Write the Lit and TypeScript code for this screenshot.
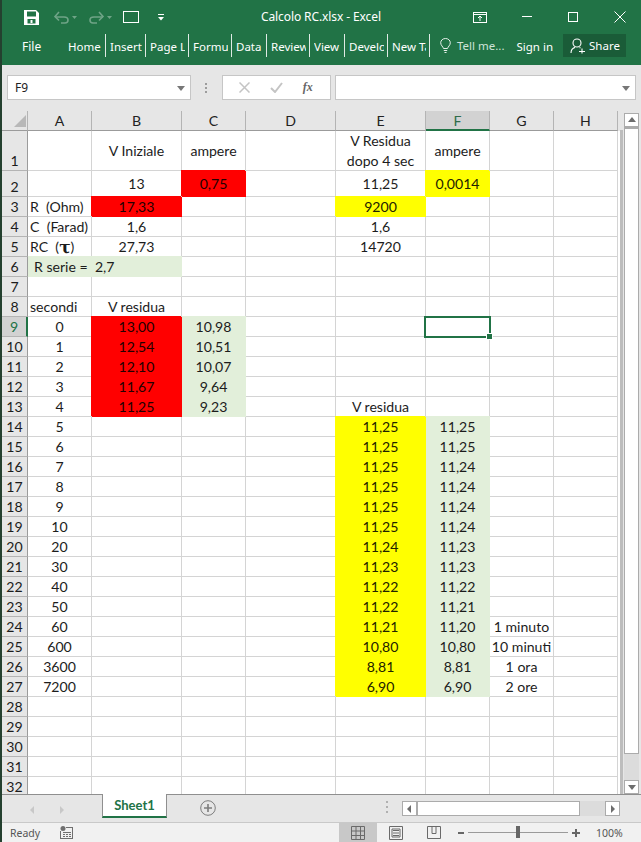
import { LitElement, html, css, svg } from "lit";
import { customElement } from "lit/decorators.js";

type Cell = { t?: unknown; f?: "r" | "y" | "g"; left?: boolean; span?: number; sel?: boolean };

const COLS = ["A", "B", "C", "D", "E", "F", "G", "H"];
const TABS: [string, number][] = [
  ["Home", 42], ["Insert", 40], ["Page L", 43], ["Formu", 43], ["Data", 35],
  ["Review", 43], ["View", 35], ["Develop", 43], ["New Tab", 42],
];
const R = (t: string): Cell => ({ t, f: "r" });
const Y = (t: string): Cell => ({ t, f: "y" });
const G = (t: string): Cell => ({ t, f: "g" });
const L = (t: unknown): Cell => ({ t, left: true });
const T = (t: unknown): Cell => ({ t });
const E: Cell = {};

function buildRows(): Cell[][] {
  const rows: Cell[][] = [];
  rows.push([E, T("V Iniziale"), T("ampere"), E, T(html`V Residua<br />dopo 4 sec`), T("ampere"), E, E]);
  rows.push([E, T("13"), R("0,75"), E, T("11,25"), Y("0,0014"), E, E]);
  rows.push([L("R  (Ohm)"), R("17,33"), E, E, Y("9200"), E, E, E]);
  rows.push([L("C  (Farad)"), T("1,6"), E, E, T("1,6"), E, E, E]);
  rows.push([L(html`RC  (<b class="tau">τ</b>)`), T("27,73"), E, E, T("14720"), E, E, E]);
  rows.push([{ t: html`<span class="serie">R serie =  2,7</span>`, f: "g", left: true, span: 2 }, E, E, E, E, E, E]);
  rows.push([E, E, E, E, E, E, E, E]);
  rows.push([L("secondi"), T("V residua"), E, E, E, E, E, E]);
  const mid = [["0", "13,00", "10,98"], ["1", "12,54", "10,51"], ["2", "12,10", "10,07"], ["3", "11,67", "9,64"], ["4", "11,25", "9,23"]];
  mid.forEach(([a, b, c], i) =>
    rows.push([T(a), R(b), G(c), E, i === 4 ? T("V residua") : E, i === 0 ? { sel: true } : E, E, E])
  );
  const low = [
    ["5", "11,25", "11,25", ""], ["6", "11,25", "11,25", ""], ["7", "11,25", "11,24", ""],
    ["8", "11,25", "11,24", ""], ["9", "11,25", "11,24", ""], ["10", "11,25", "11,24", ""],
    ["20", "11,24", "11,23", ""], ["30", "11,23", "11,23", ""], ["40", "11,22", "11,22", ""],
    ["50", "11,22", "11,21", ""], ["60", "11,21", "11,20", "1 minuto"], ["600", "10,80", "10,80", "10 minuti"],
    ["3600", "8,81", "8,81", "1 ora"], ["7200", "6,90", "6,90", "2 ore"],
  ];
  low.forEach(([a, e, f, g]) => rows.push([T(a), E, E, E, Y(e), G(f), g ? T(g) : E, E]));
  for (let i = 0; i < 5; i++) rows.push([E, E, E, E, E, E, E, E]);
  return rows;
}

@customElement("app-root")
export class AppRoot extends LitElement {
  static styles = css`
    :host {
      display: block;
      width: 641px;
      height: 842px;
      overflow: hidden;
      background: #e6e6e6;
      font-family: "Noto Sans", sans-serif;
      color: #222;
    }
    .app { display: flex; flex-direction: column; height: 842px; border-left: 2px solid #24402f; box-sizing: border-box; }
    svg { display: block; flex: none; }

    /* title bar */
    .head { background: #217346; height: 65px; color: #fff; flex: none; display: flex; flex-direction: column; }
    .title { height: 34px; display: flex; align-items: center; position: relative; }
    .qat { display: flex; align-items: center; padding-left: 22px; }
    .q2 { margin-left: 15px; }
    .q3 { margin-left: 11px; }
    .q4 { margin-left: 10px; }
    .q5 { margin-left: 19px; }
    .name { position: absolute; left: 259px; top: 8px; font-size: 12px; line-height: 18px; white-space: pre; letter-spacing: -0.1px; }
    .win { margin-left: auto; display: flex; align-items: center; padding-right: 15px; }
    .w2 { margin-left: 35px; }
    .w3 { margin-left: 36px; }
    .w4 { margin-left: 36px; }

    .ribbon { height: 31px; display: flex; align-items: flex-start; font-size: 11.5px; }
    .file { width: 62px; padding-left: 20px; box-sizing: border-box; line-height: 26px; font-size: 12px; }
    .tabs { display: flex; }
    .tab {
      height: 23px; line-height: 25px; box-sizing: border-box; padding: 0 3px 0 4px;
      border-right: 1px solid #dfeae4; flex: none;
    }
    .tab span { display: block; overflow: hidden; white-space: nowrap; }
    .tell { display: flex; align-items: center; height: 23px; margin-left: 10px; color: #cfe3d8; line-height: 25px; }
    .tell span { margin-left: 6px; }
    .signin { margin-left: 12px; line-height: 25px; }
    .share { margin-left: 10px; width: 63px; height: 23px; background: #1a5c38; display: flex; align-items: center; padding-left: 7px; box-sizing: border-box; line-height: 25px; }
    .share span { margin-left: 3px; }

    /* formula bar */
    .fbar { height: 46px; flex: none; display: flex; align-items: flex-start; padding: 10px 5px 0 5px; box-sizing: border-box; }
    .box { background: #fff; border: 1px solid #c6c6c6; height: 25px; box-sizing: border-box; display: flex; align-items: center; }
    .namebox { width: 184px; font-size: 12px; padding: 0 5px 0 7px; justify-content: space-between; }
    .grip { width: 31px; display: flex; justify-content: center; padding-top: 8px; }
    .btns { width: 109px; justify-content: space-around; padding: 0 7px; }
    .fx { font-family: "Liberation Serif", serif; font-style: italic; font-weight: bold; font-size: 12px; color: #666; }
    .input { margin-left: 4px; width: 302px; justify-content: flex-end; padding-right: 5px; }

    /* sheet */
    .sheet { flex: 1; display: flex; min-height: 0; background: #e6e6e6; overflow: hidden; }
    .grid {
      width: 616px; flex: none; display: grid;
      grid-template-columns: 26px 64px 90px 64px 90px 90px 64px 64px 64px;
      grid-template-rows: 20px 40px 26px;
      grid-auto-rows: 20px;
      font-family: Lato, sans-serif; font-size: 14.1px; color: #1c1c1c;
      height: 683px; overflow: hidden; align-content: start; background: #fff;
    }
    .grid > div { box-sizing: border-box; }
    .c {
      border-right: 1px solid #d4d4d4; border-bottom: 1px solid #d4d4d4;
      display: flex; align-items: center; justify-content: center; text-align: center;
      white-space: pre; line-height: 20px; position: relative;
    }
    .c.left { justify-content: flex-start; padding-left: 2px; }
    .c.r { background: #f00; border-color: #f00; box-shadow: -1px -1px 0 #f00; color: #200; }
    .c.y { background: #ff0; border-color: #ff0; box-shadow: -1px -1px 0 #ff0; color: #220; }
    .c.g { background: #e2efda; border-color: #e2efda; box-shadow: 0 -1px 0 #e2efda; }
    .serie { padding-left: 4px; }
    .tau { font-family: "DejaVu Serif", serif; font-size: 17px; line-height: 14px; }
    .h {
      background: #e6e6e6; border-right: 1px solid #b4b4b4; border-bottom: 1px solid #9b9b9b;
      display: flex; align-items: center; justify-content: center; color: #222;
    }
    .rh { border-bottom: 1px solid #b4b4b4; align-items: flex-end; line-height: 19px; background: #e6e6e6; border-right: 1px solid #9b9b9b; display: flex; justify-content: center; }
    .rh.on { background: #d2d2d2; border-right: 2px solid #217346; color: #217346; }
    .h.on { background: #d2d2d2; border-bottom: 2px solid #217346; color: #2f6b4b; }
    .corner { display: flex; align-items: flex-end; padding: 0 0 3px 10px; }
    .sel { position: absolute; left: -2px; right: -2px; top: -1px; bottom: -2px; border: 2px solid #217346; z-index: 2; }
    .sel i { position: absolute; right: -3px; bottom: -3px; width: 5px; height: 5px; background: #217346; border: 1px solid #fff; margin: -1px; box-sizing: content-box; }
    .side { flex: 1; display: flex; }
    .gap { width: 2px; background: #fff; flex: none; margin-top: 20px; }
    .edge { width: 3px; background: #bdbdbd; flex: none; margin-top: 19px; }
    .vs { margin: 2px 0 0 1px; width: 15px; flex: none; display: flex; flex-direction: column; background: #dcdcdc; box-sizing: border-box; }
    .sb { width: 15px; height: 14px; background: #fff; border: 1px solid #ababab; box-sizing: border-box; display: flex; align-items: center; justify-content: center; flex: none; }
    .vthumb { flex: none; height: 627px; background: #fff; border: 1px solid #ababab; border-top-width: 2px; box-sizing: border-box; }
    .vtrack { flex: 1; }

    /* sheet tabs */
    .tabbar { height: 28px; flex: none; border-top: 1px solid #8f8f8f; display: flex; box-sizing: border-box; }
    .nav { display: flex; align-items: flex-start; padding: 11px 0 0 27px; width: 100px; box-sizing: border-box; gap: 21px; }
    .sheettab {
      width: 65px; height: 24px; margin-top: -1px; background: #fff; box-sizing: border-box;
      border-left: 1px solid #8f8f8f; border-right: 1px solid #8f8f8f; border-bottom: 2px solid #217346;
      color: #217346; font-family: Lato, sans-serif; font-weight: 700; font-size: 13px; text-align: center; line-height: 22px;
    }
    .add { margin: 5px 0 0 33px; }
    .dots { margin: 6px 0 0 170px; }
    .hs { margin: 6px 0 0 14px; width: 218px; height: 15px; display: flex; background: #dcdcdc; }
    .hs .sb { width: 15px; height: 15px; }
    .hthumb { width: 163px; height: 15px; background: #fff; border: 1px solid #ababab; box-sizing: border-box; }
    .hs .sp { flex: 1; }

    /* status */
    .status { height: 20px; flex: none; background: #f1f1f1; border-top: 1px solid #c9c9c9; box-sizing: border-box; display: flex; align-items: center; font-size: 10.5px; color: #555; }
    .ready { margin-left: 8px; width: 50px; }
    .views { display: flex; margin-left: 266px; align-items: stretch; height: 19px; }
    .v { width: 38px; display: flex; align-items: center; justify-content: center; }
    .v.on { background: #c8c8c8; }
    .zoom { display: flex; align-items: center; margin-left: 5px; }
    .slider { width: 100px; height: 1px; background: #9a9a9a; margin: 0 4px; position: relative; }
    .slider i { position: absolute; left: 48px; top: -6px; width: 4px; height: 12px; background: #666; }
    .pct { margin-left: 16px; color: #555; font-size: 10.5px; }
  `;

  private rows = buildRows();

  private tri(dir: "up" | "down" | "left" | "right", color = "#6d6d6d") {
    const p = { up: "0,6 4,1 8,6", down: "0,2 8,2 4,7", left: "5,0 5,8 1,4", right: "2,0 2,8 6,4" }[dir];
    return html`<svg width="8" height="8" viewBox="0 0 8 8"><polygon points=${p} fill=${color} /></svg>`;
  }

  private renderTitle() {
    return html`
      <div class="title">
        <div class="qat">
          <svg width="15" height="15" viewBox="0 0 15 15">
            <path fill="#fff" fill-rule="evenodd" d="M0 0h12l3 3v12H0zM3 1.500v5h9v-5zM3.500 9v4.500h8V9z" />
            <rect x="6.500" y="10" width="2" height="3" fill="#fff" />
          </svg>
          <svg class="q2" width="24" height="14" viewBox="0 0 24 14" fill="none" stroke="#6fa487" stroke-width="1.6">
            <path d="M1 7h9c3 0 4 1.500 4 3s-1 3-3 3H7" /><path d="M5 2L1 6.500l4 4" />
            <polygon points="18,6 23,6 20.500,9" fill="#6fa487" stroke="none" />
          </svg>
          <svg class="q3" width="24" height="14" viewBox="0 0 24 14" fill="none" stroke="#6fa487" stroke-width="1.6">
            <path d="M14 7H5c-3 0-4 1.500-4 3s1 3 3 3h4" /><path d="M10 2l4 4.500-4 4" />
            <polygon points="18,6 23,6 20.500,9" fill="#6fa487" stroke="none" />
          </svg>
          <svg class="q4" width="16" height="12" viewBox="0 0 16 12"><rect x=".5" y=".5" width="15" height="11" fill="none" stroke="#fff" /></svg>
          <svg class="q5" width="6" height="7" viewBox="0 0 6 7"><rect width="6" height="1" y="0" fill="#fff" /><polygon points="0,3 6,3 3,6.500" fill="#fff" /></svg>
        </div>
        <div class="name">Calcolo RC.xlsx - Excel</div>
        <div class="win">
          <svg width="14" height="11" viewBox="0 0 14 11" fill="none" stroke="#fff">
            <rect x=".5" y=".5" width="13" height="10" /><path d="M.5 2.500h13M7 9V4.500M5 6l2-2 2 2" />
          </svg>
          <svg class="w2" width="10" height="2" viewBox="0 0 10 2"><rect width="10" height="1" fill="#fff" /></svg>
          <svg class="w3" width="10" height="10" viewBox="0 0 10 10"><rect x=".5" y=".5" width="9" height="9" fill="none" stroke="#fff" /></svg>
          <svg class="w4" width="12" height="12" viewBox="0 0 12 12" stroke="#fff"><path d="M.5 .5l11 11M11.500 .5l-11 11" /></svg>
        </div>
      </div>
      <div class="ribbon">
        <div class="file">File</div>
        <div class="tabs">
          ${TABS.map(([t, w]) => html`<div class="tab" style="width:${w}px"><span>${t}</span></div>`)}
        </div>
        <div class="tell">
          <svg width="11" height="15" viewBox="0 0 11 15" fill="none" stroke="#e6f0ea">
            <path d="M3.500 10.500C3 8.500.7 7.500.7 4.700a4.800 4.200 0 0 1 9.600 0c0 2.800-2.300 3.800-2.800 5.800z" /><path d="M3.800 12.500h3.400M4.500 14.500h2" />
          </svg>
          <span>Tell me...</span>
        </div>
        <div class="signin">Sign in</div>
        <div class="share">
          <svg width="16" height="16" viewBox="0 0 16 16" fill="none" stroke="#fff" stroke-width="1.1">
            <circle cx="7" cy="5" r="4" /><path d="M1 15c0-3 2-5 4-5.600M9.500 9.500l1 .5M9 13.500h6M12 10.500v5" />
          </svg>
          <span>Share</span>
        </div>
      </div>
    `;
  }

  private renderFormula() {
    return html`
      <div class="fbar">
        <div class="box namebox"><span>F9</span>${this.tri("down", "#777")}</div>
        <div class="grip">
          <svg width="2" height="10" viewBox="0 0 2 10" fill="#9c9c9c"><rect width="2" height="2" /><rect y="4" width="2" height="2" /><rect y="8" width="2" height="2" /></svg>
        </div>
        <div class="box btns">
          <svg width="11" height="11" viewBox="0 0 11 11" stroke="#c4c4c4" stroke-width="1.500"><path d="M.5 .5l10 10M10.500 .5l-10 10" /></svg>
          <svg width="13" height="11" viewBox="0 0 13 11" fill="none" stroke="#c4c4c4" stroke-width="2"><path d="M1 6l4 4 7-9" /></svg>
          <span class="fx">fx</span>
        </div>
        <div class="box input">${this.tri("down", "#777")}</div>
      </div>
    `;
  }

  private renderGrid() {
    return html`
      <div class="grid">
        <div class="h corner">
          <svg width="12" height="12" viewBox="0 0 12 12"><polygon points="12,0 12,12 0,12" fill="#b8b8b8" /></svg>
        </div>
        ${COLS.map((c) => html`<div class="h ${c === "F" ? "on" : ""}">${c}</div>`)}
        ${this.rows.map(
          (row, i) => html`
            <div class="rh ${i === 8 ? "on" : ""}">${i + 1}</div>
            ${row.map(
              (c) => html`<div
                class="c ${c.f ?? ""} ${c.left ? "left" : ""}"
                style=${c.span ? `grid-column:span ${c.span}` : ""}
              >${c.t ?? ""}${c.sel ? html`<div class="sel"><i></i></div>` : ""}</div>`
            )}
          `
        )}
      </div>
    `;
  }

  private renderSide() {
    return html`
      <div class="side">
        <div class="gap"></div>
        <div class="edge"></div>
        <div class="vs">
          <div class="sb">${this.tri("up")}</div>
          <div class="vthumb"></div>
          <div class="vtrack"></div>
          <div class="sb">${this.tri("down")}</div>
        </div>
      </div>
    `;
  }

  private renderTabs() {
    return html`
      <div class="tabbar">
        <div class="nav">${this.tri("left", "#c8c8c8")}${this.tri("right", "#c8c8c8")}</div>
        <div class="sheettab">Sheet1</div>
        <div class="add">
          <svg width="16" height="16" viewBox="0 0 16 16" fill="none" stroke="#7d7d7d">
            <circle cx="8" cy="8" r="7.300" /><path d="M4 8h8M8 4v8" stroke-width="1.600" />
          </svg>
        </div>
        <div class="dots">
          <svg width="2" height="12" viewBox="0 0 2 12" fill="#b0b0b0"><rect width="2" height="2" /><rect y="5" width="2" height="2" /><rect y="10" width="2" height="2" /></svg>
        </div>
        <div class="hs">
          <div class="sb">${this.tri("left")}</div>
          <div class="hthumb"></div>
          <div class="sp"></div>
          <div class="sb">${this.tri("right")}</div>
        </div>
      </div>
    `;
  }

  private renderStatus() {
    const grid = svg`<path d="M.5 .5h13v13H.5zM.5 5h13M.5 9.500h13M5 .5v13M9.500 .5v13" />`;
    return html`
      <div class="status">
        <div class="ready">Ready</div>
        <svg width="13" height="13" viewBox="0 0 13 13" fill="#6f6f6f">
          <circle cx="3" cy="2.500" r="2.500" />
          <path fill-rule="evenodd" d="M6 1h7v12H0V5h1v7h11V2H6z" />
          <path d="M3 6h8v1H3zM3 8h2v1H3zM6 8h2v1H6zM9 8h2v1H9zM3 10h2v1H3zM6 10h2v1H6zM9 10h2v1H9z" />
        </svg>
        <div class="views">
          <div class="v on"><svg width="14" height="14" viewBox="0 0 14 14" fill="none" stroke="#6a6a6a">${grid}</svg></div>
          <div class="v"><svg width="14" height="14" viewBox="0 0 14 14" fill="none" stroke="#6a6a6a"><path d="M.5 .5h13v13H.5zM4 4.500h6M4 7h6M4 9.500h6M3 3h8v8H3z" /></svg></div>
          <div class="v"><svg width="14" height="13" viewBox="0 0 14 13" fill="none" stroke="#6a6a6a"><path d="M.5 .5h13v12H.5zM5 .5v7h4V.5" /></svg></div>
        </div>
        <div class="zoom">
          <svg width="6" height="2" viewBox="0 0 6 2"><rect width="6" height="2" fill="#666" /></svg>
          <div class="slider"><i></i></div>
          <svg width="8" height="8" viewBox="0 0 8 8" fill="#666"><path d="M3 0h2v3h3v2H5v3H3V5H0V3h3z" /></svg>
        </div>
        <div class="pct">100%</div>
      </div>
    `;
  }

  render() {
    return html`
      <div class="app">
        <div class="head">${this.renderTitle()}</div>
        ${this.renderFormula()}
        <div class="sheet">${this.renderGrid()}${this.renderSide()}</div>
        ${this.renderTabs()}
        ${this.renderStatus()}
      </div>
    `;
  }
}
